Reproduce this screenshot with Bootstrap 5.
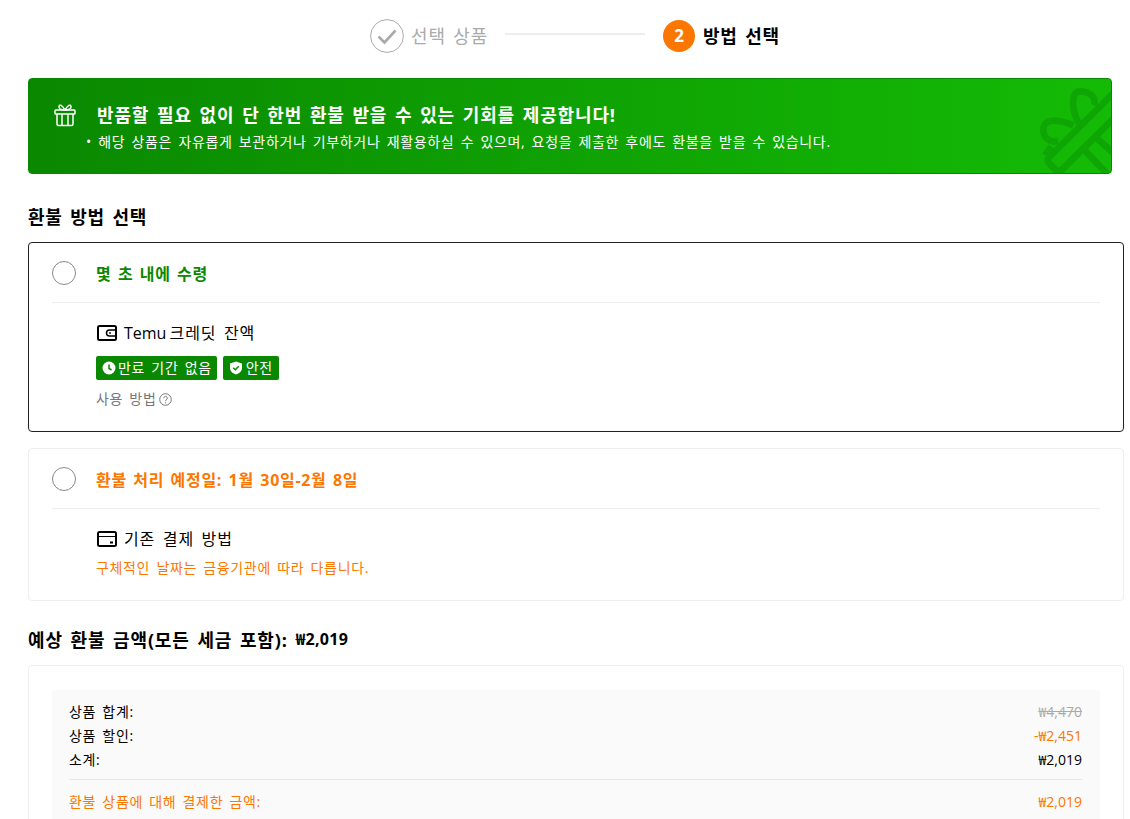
<!DOCTYPE html>
<html lang="ko">
<head>
<meta charset="utf-8">
<title>환불 방법</title>
<link href="https://cdn.jsdelivr.net/npm/bootstrap@5.3.0/dist/css/bootstrap.min.css" rel="stylesheet">
<style>
html,body{height:819px;overflow:hidden;background:#fff}
body{font-family:"Open Sans","Noto Sans CJK KR",sans-serif;font-size:14px;color:#000;line-height:1.25;letter-spacing:.65px;word-spacing:2px}
.page-wrap{padding:0 6px 0 28px}
.stepper{height:70px;padding:1px 2px 0 0}
.step-done{width:34px;height:34px;flex:none}
.step-num{width:32px;height:32px;border-radius:50%;background:#fb7701;color:#fff;font-weight:700;font-size:17px;flex:none;letter-spacing:0}
.step-label{font-size:18px;line-height:24px;margin-left:7px;letter-spacing:.76px;word-spacing:2.2px}
.step-label-off{color:#aaa}
.step-label-on{color:#000;font-weight:700;margin-left:8px}
.step-line{width:140px;height:2px;background:#eee;margin:0 18px 3px 17px}
.promo{margin-top:8px;width:1084px;height:96px;border:1px solid #0a8800;border-radius:4px;background:linear-gradient(90deg,#0a8800,#14bb06);color:#fff;overflow:hidden;padding:23px 0 0 23px;position:relative}
.promo-title{font-size:18px;font-weight:700;line-height:24px;letter-spacing:.86px;word-spacing:2.2px}
.promo-sub{font-size:14px;line-height:20px;margin-top:4px;padding-left:34px}
.promo-gift{width:26px;height:26px;margin-right:19px}
.promo-deco{position:absolute;right:-1px;top:-1px;width:82px;height:96px}
.sect-title{font-size:18px;font-weight:700;line-height:24px;margin:31px 0 13px;letter-spacing:.76px;word-spacing:2.2px}
.opt-box{border:1px solid #eee;border-radius:4px;padding:0 23px;margin-bottom:16px}
.opt-box-on{border-color:#222}
.opt-head{height:60px;border-bottom:1px solid #eee;padding-top:1px}
.radio-ring{width:24px;height:24px;border:1px solid #888;border-radius:50%;margin-right:20px;flex:none}
.opt-title{font-size:16px;font-weight:700;line-height:22px;letter-spacing:.7px;word-spacing:1.6px;padding-top:2px}
.tone-green{color:#0a8800}
.tone-orange{color:#fb7701}
.opt-body{padding-left:44px}
.opt-line{font-size:16px;line-height:22px;margin-top:19px;letter-spacing:.9px;word-spacing:2.500px}
.latin-word{letter-spacing:0;word-spacing:-1px}
.opt-ico{width:22px;height:18px;margin-right:6px;flex:none}
.tag-row{margin-top:12px;gap:6px}
.tag-green{height:24px;background:#0a8800;color:#fff;font-size:14px;line-height:24px;padding:0 5px 0 6px;border-radius:2px}
.tag-green svg{width:14px;height:14px;margin-right:2px}
.tag-roomy{padding:0 6px}
.tag-roomy svg{margin-right:3px}
.how-use{color:#777;font-size:14px;line-height:20px;margin-top:9px;margin-bottom:22px}
.how-use svg{width:13px;height:13px;margin-left:3px}
.note-line{font-size:14px;line-height:20px;margin-top:8px;margin-bottom:22px}
.est-title{font-size:18px;font-weight:700;line-height:24px;margin:27px 0 12px;letter-spacing:.85px;word-spacing:2.2px}
.est-price{font-size:16px;font-weight:700;margin-left:8px;position:relative;top:-2px;letter-spacing:.3px}
.sum-box{border:1px solid #eee;border-radius:4px;padding:24px 23px 0}
.sum-inner{background:#fafafa;padding:10px 18px 20px 17px;height:300px}
.sum-row{font-size:14px;line-height:24px}
.sum-amt{letter-spacing:0}
.sum-off{color:#aaa}
.sum-rule{border-top:1px solid #e6e6e6;margin:7px 0 10px}
</style>
</head>
<body>
<div class="page-wrap">
  <div class="stepper d-flex align-items-center justify-content-center">
    <div class="d-flex align-items-center">
      <svg class="step-done" viewBox="0 0 34 34" fill="none"><circle cx="17" cy="17" r="16.4" stroke="#aaa" stroke-width="1"/><path d="M8.500 17.500 14.500 23.500 25.500 11.500" stroke="#aaa" stroke-width="2.600"/></svg>
      <span class="step-label step-label-off">선택 상품</span>
    </div>
    <div class="step-line"></div>
    <div class="d-flex align-items-center">
      <div class="step-num d-flex align-items-center justify-content-center">2</div>
      <span class="step-label step-label-on">방법 선택</span>
    </div>
  </div>

  <div class="promo">
    <div class="d-flex align-items-center">
      <svg class="promo-gift" viewBox="0 0 26 26" fill="none" stroke="#fff" stroke-width="1.500"><rect x="3" y="8" width="20" height="4" rx=".8"/><path d="M5 12v10a1.500 1.500 0 0 0 1.500 1.500h13A1.500 1.500 0 0 0 21 22V12M10 12v11.500M16 12v11.500M13 8C10 3 7.500 2 7 4.500 6.500 7 9 8 13 8ZM13 8c3-5 5.500-6 6-3.500C19.500 7 17 8 13 8Z"/></svg>
      <div class="promo-title">반품할 필요 없이 단 한번 환불 받을 수 있는 기회를 제공합니다!</div>
    </div>
    <div class="promo-sub">• 해당 상품은 자유롭게 보관하거나 기부하거나 재활용하실 수 있으며, 요청을 제출한 후에도 환불을 받을 수 있습니다.</div>
    <svg class="promo-deco" viewBox="0 0 246 288" fill="none" stroke="#0ea604" stroke-width="20"><path d="M250 46 58 237Q48 247 58 257L76 275Q86 285 96 275L250 122"/><path d="M165 218 232 288M200 180 250 225"/><path d="M148 138C125 100 120 40 150 40 185 40 200 65 192 82"/><path d="M130 142C90 125 45 120 40 150 38 180 60 195 85 190"/><path d="M64 205 46 232"/></svg>
  </div>

  <div class="sect-title">환불 방법 선택</div>

  <div class="opt-box opt-box-on">
    <div class="opt-head d-flex align-items-center">
      <span class="radio-ring"></span>
      <span class="opt-title tone-green">몇 초 내에 수령</span>
    </div>
    <div class="opt-body">
      <div class="opt-line d-flex align-items-center">
        <svg class="opt-ico" viewBox="0 0 22 18" fill="none" stroke="#000"><rect x="2" y="2" width="18" height="14" rx="1.500" stroke-width="2"/><path d="M20 6h-6.500a3 3 0 0 0 0 6H20" stroke-width="1.500"/><circle cx="14" cy="9" r=".9" fill="#000" stroke="none"/></svg>
        <span><span class="latin-word">Temu </span>크레딧 잔액</span>
      </div>
      <div class="tag-row d-flex">
        <span class="tag-green d-flex align-items-center"><svg viewBox="0 0 14 14"><circle cx="7" cy="7" r="6.500" fill="#fff"/><path d="M7 3.500V7.500l2.500 1.500" stroke="#0a8800" stroke-width="1.500" fill="none"/></svg>만료 기간 없음</span>
        <span class="tag-green tag-roomy d-flex align-items-center"><svg viewBox="0 0 14 14"><path d="M7 .5 13 2.500V7c0 3.500-3 5.500-6 6.500C4 12.500 1 10.500 1 7V2.500Z" fill="#fff"/><path d="M4.200 6.800 6.300 8.800 9.800 5.200" stroke="#0a8800" stroke-width="1.500" fill="none"/></svg>안전</span>
      </div>
      <div class="how-use d-flex align-items-center">사용 방법<svg viewBox="0 0 13 13" fill="none" stroke="#777"><circle cx="6.500" cy="6.500" r="5.800"/><path d="M4.700 5.200a1.800 1.800 0 1 1 2.800 1.500c-.7.400-1 .8-1 1.500M6.500 9.300v1"/></svg></div>
    </div>
  </div>

  <div class="opt-box">
    <div class="opt-head d-flex align-items-center">
      <span class="radio-ring"></span>
      <span class="opt-title tone-orange">환불 처리 예정일: 1월 30일-2월 8일</span>
    </div>
    <div class="opt-body">
      <div class="opt-line d-flex align-items-center">
        <svg class="opt-ico" viewBox="0 0 22 18" fill="none" stroke="#000" stroke-width="2"><rect x="2" y="2" width="18" height="14" rx="1.500"/><path d="M2 6.500h18" stroke-width="1"/><path d="M14 12.500h3"/></svg>
        <span>기존 결제 방법</span>
      </div>
      <div class="note-line tone-orange">구체적인 날짜는 금융기관에 따라 다릅니다.</div>
    </div>
  </div>

  <div class="est-title">예상 환불 금액(모든 세금 포함):<span class="est-price">₩2,019</span></div>

  <div class="sum-box">
    <div class="sum-inner">
      <div class="sum-row d-flex justify-content-between"><span>상품 합계:</span><span class="sum-amt sum-off text-decoration-line-through">₩4,470</span></div>
      <div class="sum-row d-flex justify-content-between"><span>상품 할인:</span><span class="sum-amt tone-orange">-₩2,451</span></div>
      <div class="sum-row d-flex justify-content-between"><span>소계:</span><span class="sum-amt">₩2,019</span></div>
      <div class="sum-rule"></div>
      <div class="sum-row tone-orange d-flex justify-content-between"><span>환불 상품에 대해 결제한 금액:</span><span class="sum-amt">₩2,019</span></div>
    </div>
  </div>
</div>
</body>
</html>
